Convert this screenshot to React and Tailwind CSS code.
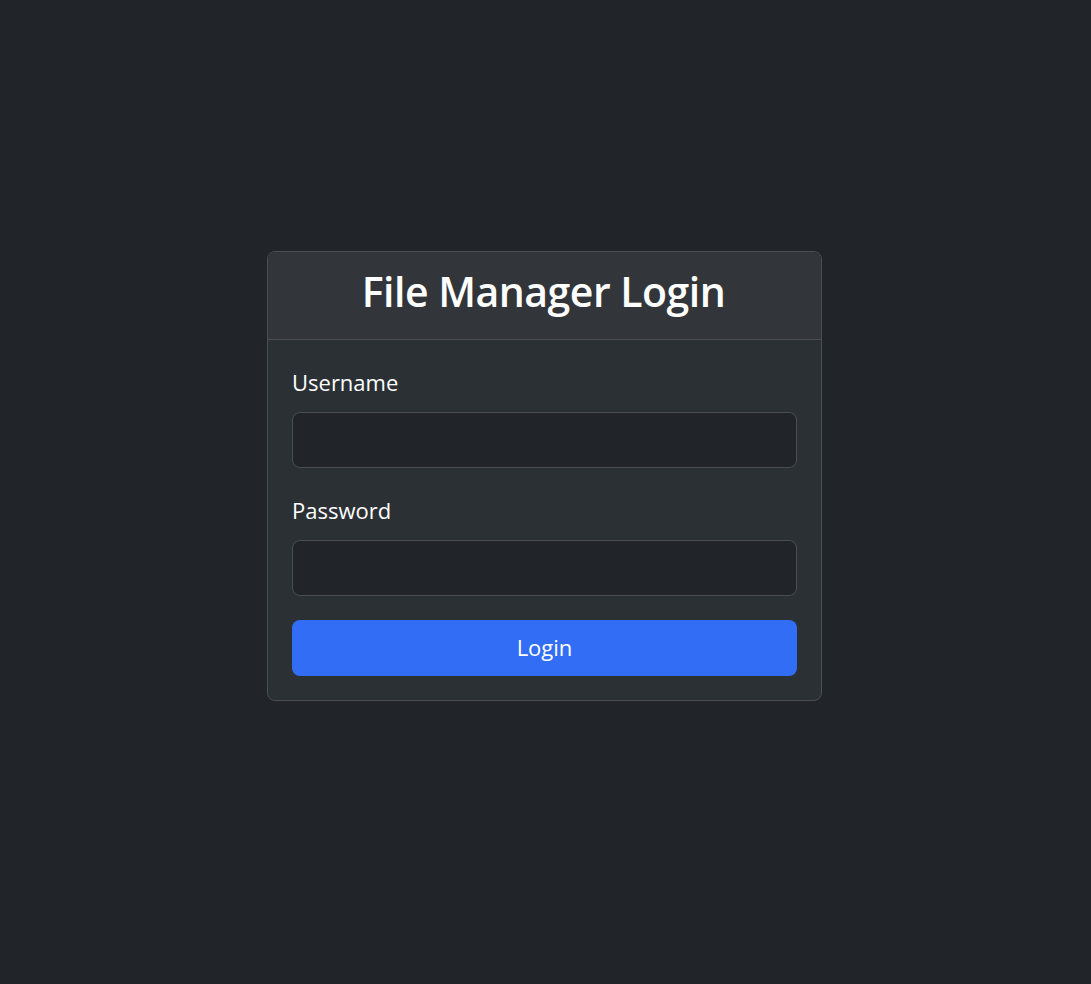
const App = () => {
  return (
    <div className="min-h-screen bg-[#212529] flex items-center justify-center font-['Open_Sans','Noto_Sans',sans-serif] text-white">
      <div className="w-[555px] -mt-[33px] mr-[2px] bg-[#2b3035] border border-[#4a4f55] rounded-lg overflow-hidden">
        {/* Header */}
        <div className="h-[88px] pb-[8px] bg-[#323539] border-b border-[#4a4f55] flex items-center justify-center">
          <h1 className="text-[41px] font-semibold leading-none tracking-[-0.5px] -ml-[2px]">File Manager Login</h1>
        </div>

        {/* Form */}
        <form className="p-6" onSubmit={(e) => e.preventDefault()}>
          <div className="mb-6">
            <label className="block text-[22px] leading-9 mb-3">Username</label>
            <input
              type="text"
              className="block w-full h-14 px-4 bg-[#212529] border border-[#4a4f55] rounded-lg text-xl outline-none"
            />
          </div>
          <div className="mb-6">
            <label className="block text-[22px] leading-9 mb-3">Password</label>
            <input
              type="password"
              className="block w-full h-14 px-4 bg-[#212529] border border-[#4a4f55] rounded-lg text-xl outline-none"
            />
          </div>
          <button
            type="submit"
            className="block w-full h-14 bg-[#326ef5] rounded-lg text-[22px] text-white"
          >
            Login
          </button>
        </form>
      </div>
    </div>
  );
};

export default App;
